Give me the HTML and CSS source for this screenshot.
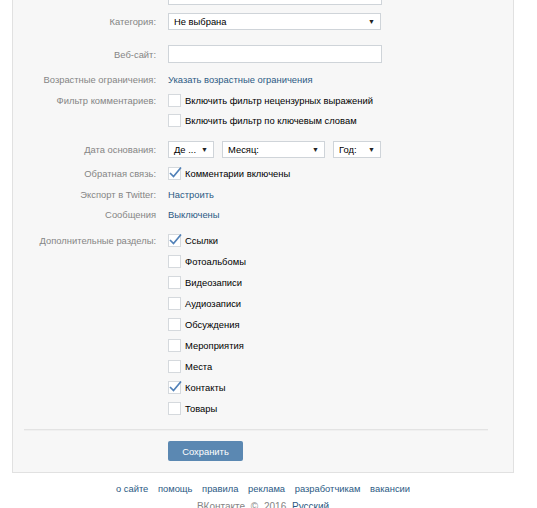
FILE: index.html
```html
<!DOCTYPE html>
<html lang="ru">
<head>
    <meta charset="UTF-8">
    <title>Управление сообществом</title>
    <link rel="stylesheet" href="styles.css">
</head>
<body>
    <div class="card">
        <div class="row r-first">
            <div class="label"></div>
            <div class="field"><div class="input wide"></div></div>
        </div>
        <div class="row r-select">
            <div class="label">Категория:</div>
            <div class="field">
                <div class="select wide"><span>Не выбрана</span><span class="arrow">▼</span></div>
            </div>
        </div>
        <div class="row r-site">
            <div class="label">Веб-сайт:</div>
            <div class="field"><div class="input wide"></div></div>
        </div>
        <div class="row r-age">
            <div class="label">Возрастные ограничения:</div>
            <div class="field"><a class="link">Указать возрастные ограничения</a></div>
        </div>
        <div class="row r-text">
            <div class="label">Фильтр комментариев:</div>
            <div class="field"><span class="check"></span>Включить фильтр нецензурных выражений</div>
        </div>
        <div class="row r-text">
            <div class="label"></div>
            <div class="field"><span class="check"></span>Включить фильтр по ключевым словам</div>
        </div>
        <div class="row r-date">
            <div class="label">Дата основания:</div>
            <div class="field dates">
                <div class="select day"><span>Де ...</span><span class="arrow">▼</span></div>
                <div class="select month"><span>Месяц:</span><span class="arrow">▼</span></div>
                <div class="select year"><span>Год:</span><span class="arrow">▼</span></div>
            </div>
        </div>
        <div class="row r-feedback">
            <div class="label">Обратная связь:</div>
            <div class="field"><span class="check on"><svg width="15" height="13" viewBox="0 0 15 13"><polyline points="2,7 5.5,10.5 13,1.5" /></svg></span>Комментарии включены</div>
        </div>
        <div class="row r-text">
            <div class="label">Экспорт в Twitter:</div>
            <div class="field"><a class="link">Настроить</a></div>
        </div>
        <div class="row r-text">
            <div class="label">Сообщения</div>
            <div class="field"><a class="link">Выключены</a></div>
        </div>

        <div class="sections">
            <div class="row r-item">
                <div class="label">Дополнительные разделы:</div>
                <div class="field"><span class="check on"><svg width="15" height="13" viewBox="0 0 15 13"><polyline points="2,7 5.5,10.5 13,1.5" /></svg></span>Ссылки</div>
            </div>
            <div class="row r-item"><div class="label"></div><div class="field"><span class="check"></span>Фотоальбомы</div></div>
            <div class="row r-item"><div class="label"></div><div class="field"><span class="check"></span>Видеозаписи</div></div>
            <div class="row r-item"><div class="label"></div><div class="field"><span class="check"></span>Аудиозаписи</div></div>
            <div class="row r-item"><div class="label"></div><div class="field"><span class="check"></span>Обсуждения</div></div>
            <div class="row r-item"><div class="label"></div><div class="field"><span class="check"></span>Мероприятия</div></div>
            <div class="row r-item"><div class="label"></div><div class="field"><span class="check"></span>Места</div></div>
            <div class="row r-item">
                <div class="label"></div>
                <div class="field"><span class="check on"><svg width="15" height="13" viewBox="0 0 15 13"><polyline points="2,7 5.5,10.5 13,1.5" /></svg></span>Контакты</div>
            </div>
            <div class="row r-item"><div class="label"></div><div class="field"><span class="check"></span>Товары</div></div>
        </div>

        <div class="divider"></div>

        <div class="row r-button">
            <div class="label"></div>
            <div class="field"><button class="save">Сохранить</button></div>
        </div>
    </div>

    <div class="footer">
        <div class="footer-links">
            <a>о сайте</a>
            <a>помощь</a>
            <a>правила</a>
            <a>реклама</a>
            <a>разработчикам</a>
            <a>вакансии</a>
        </div>
        <div class="copy">ВКонтакте © 2016 <a>Русский</a></div>
    </div>
</body>
</html>
```

FILE: styles.css
```css
body {
    margin: 0;
    background: #ffffff;
    font-family: "Liberation Sans", Arial, sans-serif;
    font-size: 9.4px;
    color: #000000;
}
.card {
    width: 500px;
    margin: -13px 0 0 12px;
    background: #f7f7f7;
    border: 1px solid #e1e1e1;
    border-top: none;
    padding-bottom: 11px;
}
.row {
    display: flex;
    align-items: center;
}
.label {
    width: 143px;
    flex: none;
    text-align: right;
    color: #858585;
    padding-right: 12px;
}
.field {
    display: flex;
    align-items: center;
}
.link {
    color: #2b5a84;
}
.r-first { height: 18px; }
.r-select { height: 17px; margin-top: 8px; }
.r-site { height: 18px; margin-top: 15px; }
.r-age { height: 20px; margin-top: 6px; }
.r-text { height: 20px; }
.r-age + .r-text { margin-top: 1px; }
.r-date { height: 17px; margin-top: 11px; }
.r-feedback { height: 20px; margin-top: 5px; }
.r-feedback + .r-text { margin-top: 1px; }
.sections { margin-top: 6px; }
.r-item { height: 21px; }

.input, .select {
    box-sizing: border-box;
    background: #ffffff;
    border: 1px solid #cfd4d9;
}
.input.wide { width: 214px; height: 18px; }
.select {
    height: 17px;
    display: flex;
    align-items: center;
    justify-content: space-between;
    padding: 0 5px 0 5px;
}
.select.wide { width: 213px; }
.arrow {
    font-size: 7px;
    color: #222222;
}
.dates { gap: 8px; }
.select.day { width: 46px; }
.select.month { width: 103px; }
.select.year { width: 48px; }

.check {
    box-sizing: border-box;
    width: 13px;
    height: 13px;
    margin-right: 4px;
    background: #ffffff;
    border: 1px solid #d5d9dd;
    position: relative;
    flex: none;
}
.check svg {
    position: absolute;
    left: -1px;
    top: -2px;
}
.check polyline {
    fill: none;
    stroke: #5181b8;
    stroke-width: 1.7;
}

.divider {
    height: 1px;
    margin: 10px 25px 0 11px;
    background: #e3e3e3;
    border-bottom: 1px solid #f0f0f0;
}
.r-button { margin-top: 10px; }
.save {
    width: 75px;
    height: 20px;
    padding: 0;
    border: none;
    border-radius: 2px;
    background: #5b88b2;
    color: #ffffff;
    font-family: inherit;
    font-size: 9.4px;
}

.footer {
    width: 502px;
    margin-left: 12px;
    text-align: center;
    padding-top: 10px;
}
.footer-links a {
    color: #2b5a84;
    margin: 0 3.5px;
}
.copy {
    margin-top: 7px;
    color: #858585;
    font-size: 10px;
    word-spacing: 3px;
}
.copy a { color: #2b5a84; }
```
